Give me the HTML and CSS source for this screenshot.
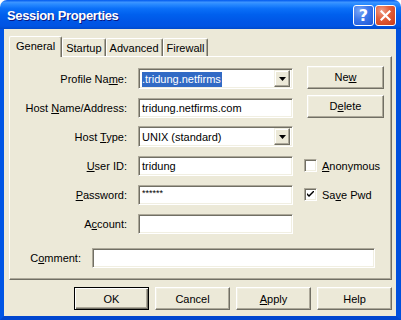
FILE: index.html
```html
<!DOCTYPE html>
<html lang="en">
<head>
    <meta charset="UTF-8">
    <title>Session Properties</title>
    <link rel="stylesheet" href="styles.css">
</head>
<body>

    <div class="window">
        <div class="titlebar">
            <span class="title">Session Properties</span>
            <div class="caption">
                <div class="cap-btn help">?</div>
                <div class="cap-btn close">
                    <svg width="11" height="11" viewBox="0 0 11 11">
                        <path d="M1.5 1.5 L9.5 9.5 M9.5 1.5 L1.5 9.5" stroke="#fff" stroke-width="2.2" stroke-linecap="square"/>
                    </svg>
                </div>
            </div>
        </div>

        <div class="frame">
            <div class="client">

                <!-- Tabs -->
                <div class="tabs">
                    <div class="tab active">General</div>
                    <div class="tab">Startup</div>
                    <div class="tab">Advanced</div>
                    <div class="tab">Firewall</div>
                </div>

                <!-- General page -->
                <div class="panel">
                    <div class="form">
                        <label>Profile Na<u>m</u>e:</label>
                        <div class="combo">
                            <span class="value"><span class="sel">.tridung.netfirms</span></span>
                            <span class="drop"><svg width="7" height="4" viewBox="0 0 7 4"><path d="M0 0 H7 L3.5 4 Z" fill="#000"/></svg></span>
                        </div>
                        <div class="side"><div class="btn small">Ne<u>w</u></div></div>

                        <label>Host <u>N</u>ame/Address:</label>
                        <div class="field">tridung.netfirms.com</div>
                        <div class="side"><div class="btn small">D<u>e</u>lete</div></div>

                        <label>Host <u>T</u>ype:</label>
                        <div class="combo">
                            <span class="value">UNIX (standard)</span>
                            <span class="drop"><svg width="7" height="4" viewBox="0 0 7 4"><path d="M0 0 H7 L3.5 4 Z" fill="#000"/></svg></span>
                        </div>
                        <div class="side"></div>

                        <label><u>U</u>ser ID:</label>
                        <div class="field">tridung</div>
                        <div class="side">
                            <div class="check"><span class="box"></span><span><u>A</u>nonymous</span></div>
                        </div>

                        <label><u>P</u>assword:</label>
                        <div class="field pwd">******</div>
                        <div class="side">
                            <div class="check"><span class="box"><svg width="7" height="7" viewBox="0 0 7 7"><path d="M0 2 L0 4 L2 6 L7 1 L7 -1 L2 4 Z" fill="#000"/></svg></span><span>Sa<u>v</u>e Pwd</span></div>
                        </div>

                        <label>A<u>c</u>count:</label>
                        <div class="field"></div>
                        <div class="side"></div>
                    </div>

                    <div class="comment-row">
                        <label>C<u>o</u>mment:</label>
                        <div class="field wide"></div>
                    </div>
                </div>

                <!-- Dialog buttons -->
                <div class="buttons">
                    <div class="btn default">OK</div>
                    <div class="btn">Cancel</div>
                    <div class="btn"><u>A</u>pply</div>
                    <div class="btn">Help</div>
                </div>

            </div>
        </div>
    </div>

</body>
</html>
```

FILE: styles.css
```css
body { margin: 0; font-family: "Liberation Sans", Arial, sans-serif; font-size: 11px; color: #000; background: #fff; }

.window { width: 401px; height: 320px; display: flex; flex-direction: column; }

/* title bar */
.titlebar { height: 29px; display: flex; align-items: center; justify-content: space-between;
    background: linear-gradient(to bottom, #0058ee 0%, #3d95ff 8%, #2a8bff 14%, #0a6ff8 30%, #0060ee 50%, #0056e6 75%, #0054e3 90%, #0049cc 100%);
    border-radius: 7px 7px 0 0; }
.title { margin-left: 7px; margin-top: 1px; color: #fff; font-weight: bold; font-size: 13px; letter-spacing: -0.35px; text-shadow: 1px 1px #0a1883; }
.caption { display: flex; gap: 1px; margin-right: 5px; margin-top: 1px; }
.cap-btn { width: 19px; height: 19px; border: 1px solid #fff; border-radius: 3px; display: flex; align-items: center; justify-content: center; color: #fff; }
.help { background: radial-gradient(circle at 30% 25%, #7aa6f6 0%, #3d78ea 45%, #1d56d8 100%); font-weight: bold; font-size: 16px; font-family: "DejaVu Sans", sans-serif; }
.close { background: radial-gradient(circle at 30% 25%, #f0a08a 0%, #e2603c 40%, #c93a18 100%); }

/* frame and client area */
.frame { flex: 1; display: flex; border-left: 4px solid #0055e5; border-right: 5px solid #0050dd; border-bottom: 4px solid #0046cf; }
.client { flex: 1; background: #ece9d8; padding: 7px 4px 6px 5px; display: flex; flex-direction: column; }

/* tabs */
.tabs { height: 20px; display: flex; align-items: flex-end; }
.tab { height: 17px; padding: 0 3px; display: flex; align-items: center; border: 1px solid #fff; border-right-color: #716f64; border-bottom: none; border-radius: 2px 2px 0 0; box-shadow: inset -1px 0 #aca899; }
.tab.active { height: 21px; margin-bottom: -1px; padding: 3px 6px 0 6px; position: relative; z-index: 1; background: #ece9d8; align-items: flex-start; box-sizing: border-box; }

/* page */
.panel { border: 1px solid #fff; border-right-color: #716f64; border-bottom-color: #716f64; box-shadow: inset -1px -1px #aca899; padding: 7px 0 11px 0; }
.form { display: grid; grid-template-columns: 117px 155px 80px; grid-auto-rows: 29px; column-gap: 11px; align-items: center; }
label { text-align: right; }

.field, .combo { height: 20px; box-sizing: border-box; background: #fff; border: 1px solid; border-color: #aca899 #fff #fff #aca899; box-shadow: inset 1px 1px #716f64, inset -1px -1px #f1efe2; padding: 0 3px; display: flex; align-items: center; white-space: nowrap; }
.field.pwd { align-items: flex-start; padding-top: 2px; font-size: 9px; }
.combo { height: 21px; padding: 0 2px 0 2px; justify-content: space-between; }
.combo .value { padding-left: 1px; }
.sel { background: #316ac5; color: #fff; padding: 1px 1px 2px 0; }
.drop { width: 14px; height: 15px; border: 1px solid; border-color: #f1efe2 #716f64 #716f64 #f1efe2; box-shadow: inset -1px -1px #aca899, inset 1px 1px #fff; background: #ece9d8; display: flex; align-items: center; justify-content: center; }

.check { display: flex; align-items: center; gap: 5px; }
.box { width: 13px; height: 13px; box-sizing: border-box; background: #fff; border: 1px solid; border-color: #aca899 #fff #fff #aca899; box-shadow: inset 1px 1px #716f64, inset -1px -1px #f1efe2; display: flex; align-items: center; justify-content: center; }

.comment-row { margin-top: 10px; display: flex; align-items: center; gap: 11px; }
.comment-row label { width: 71px; }
.field.wide { width: 283px; }

/* buttons */
.btn { width: 75px; height: 23px; box-sizing: border-box; display: flex; align-items: center; justify-content: center; background: #ece9d8; border: 1px solid; border-color: #fff #716f64 #716f64 #fff; box-shadow: inset -1px -1px #aca899, inset 1px 1px #f1efe2; }
.btn.small { width: 77px; margin-left: 3px; margin-bottom: 3px; }
.btn.default { border-color: #000; box-shadow: inset 1px 1px #fff, inset -1px -1px #716f64, inset -2px -2px #aca899; }
.buttons { margin-top: 7px; display: flex; justify-content: flex-end; gap: 6px; }
```
